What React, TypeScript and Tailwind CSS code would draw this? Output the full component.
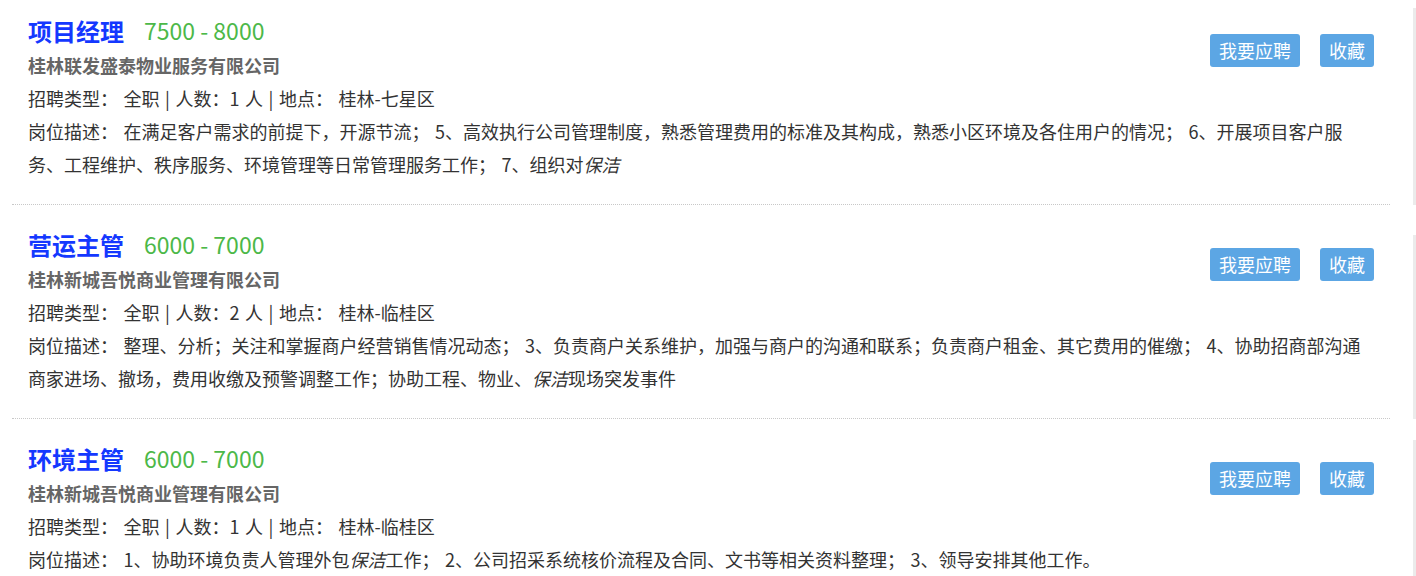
import type { ReactNode } from "react";

type Job = {
  title: string;
  salary: string;
  company: string;
  count: number;
  place: string;
  desc: ReactNode;
  first?: boolean;
  bar: string;
};

const jobs: Job[] = [
  {
    title: "项目经理",
    salary: "7500 - 8000",
    company: "桂林联发盛泰物业服务有限公司",
    count: 1,
    place: "桂林-七星区",
    first: true,
    bar: "mt-[8px] mb-0",
    desc: (
      <>
        在满足客户需求的前提下，开源节流； 5、高效执行公司管理制度，熟悉管理费用的标准及其构成，熟悉小区环境及各住用户的情况； 6、开展项目客户服务、工程维护、秩序服务、环境管理等日常管理服务工作； 7、组织对<em>保洁</em>
      </>
    ),
  },
  {
    title: "营运主管",
    salary: "6000 - 7000",
    company: "桂林新城吾悦商业管理有限公司",
    count: 2,
    place: "桂林-临桂区",
    bar: "mt-[30px] mb-0",
    desc: (
      <>
        整理、分析；关注和掌握商户经营销售情况动态； 3、负责商户关系维护，加强与商户的沟通和联系；负责商户租金、其它费用的催缴； 4、协助招商部沟通商家进场、撤场，费用收缴及预警调整工作；协助工程、物业、<em>保洁</em>现场突发事件
      </>
    ),
  },
  {
    title: "环境主管",
    salary: "6000 - 7000",
    company: "桂林新城吾悦商业管理有限公司",
    count: 1,
    place: "桂林-临桂区",
    bar: "mt-[21px] mb-0",
    desc: (
      <>
        1、协助环境负责人管理外包<em>保洁</em>工作； 2、公司招采系统核价流程及合同、文书等相关资料整理； 3、领导安排其他工作。
      </>
    ),
  },
];

function JobCard({ job }: { job: Job }) {
  return (
    <div className="flex">
      <div className="w-[1413px] shrink-0 pl-[12px] pr-[23px]">
        <article
          className={
            "border-b border-dotted border-[#c8c8c8] px-4 pb-[23px] " +
            (job.first ? "pt-[14px]" : "pt-[23px]")
          }
        >
          <div className="flex items-start justify-between">
            <div>
              <div className="flex h-[33px] items-center">
                <h2 className="text-[24px] leading-[33px] font-bold text-[#1438ff]">
                  {job.title}
                </h2>
                <span className="ml-[20px] text-[23px] leading-[33px] text-[#4cb848]">
                  {job.salary}
                </span>
              </div>
              <p className="mt-[2px] text-[18px] leading-[33px] font-bold text-[#666]">
                {job.company}
              </p>
            </div>
            <div className="mt-[20px] flex gap-5">
              <button
                type="button"
                className="h-[33px] rounded-[3px] bg-[#5ca6e4] px-[9px] text-[18px] leading-[33px] text-white"
              >
                我要应聘
              </button>
              <button
                type="button"
                className="h-[33px] rounded-[3px] bg-[#5ca6e4] px-[9px] text-[18px] leading-[33px] text-white"
              >
                收藏
              </button>
            </div>
          </div>
          <p className="text-[18px] leading-[33px] text-[#333] [word-spacing:1.5px]">
            招聘类型： 全职 | 人数：{job.count} 人 | 地点： {job.place}
          </p>
          <p className="text-[18px] leading-[33px] text-[#333] [word-spacing:1.5px]">
            岗位描述： {job.desc}
          </p>
        </article>
      </div>
      <div className={"w-[3px] shrink-0 bg-[#ebebeb] " + job.bar} />
    </div>
  );
}

export default function App() {
  return (
    <div
      className="h-[576px] w-[1416px] overflow-hidden bg-white"
      style={{ fontFamily: '"Noto Sans CJK SC", "Liberation Sans", sans-serif' }}
    >
      {jobs.map((job) => (
        <JobCard key={job.title} job={job} />
      ))}
    </div>
  );
}
